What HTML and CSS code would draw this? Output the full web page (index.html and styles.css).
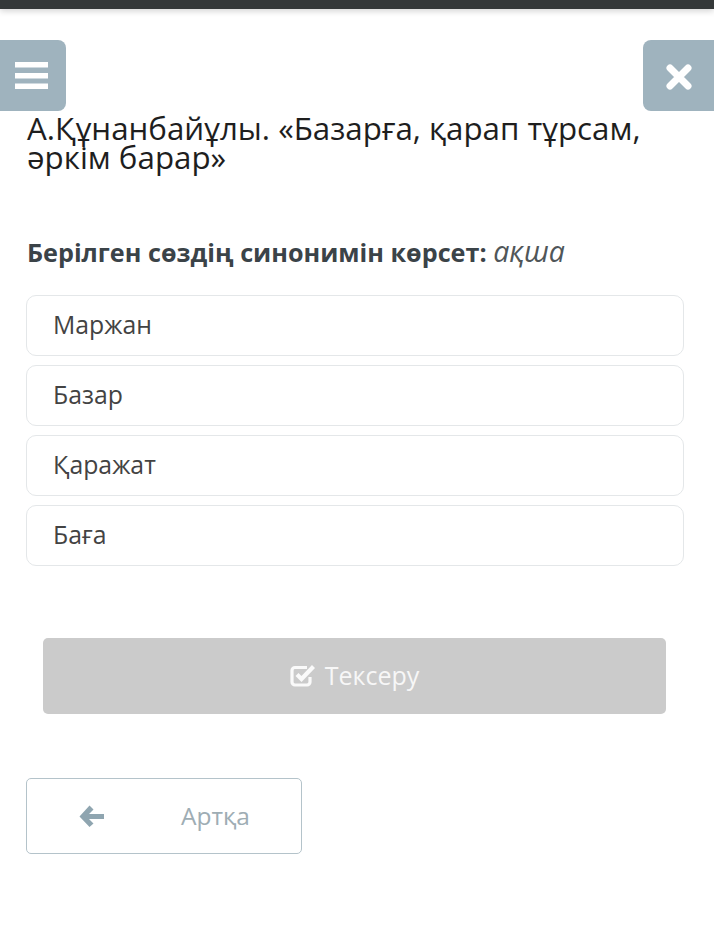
FILE: index.html
```html
<!DOCTYPE html>
<html lang="kk">
<head>
  <meta charset="UTF-8" />
  <title>Тест</title>
  <link rel="stylesheet" href="styles.css">
</head>
<body>
  <div class="topbar"></div>

  <div class="toolbar">
    <button class="tool-btn menu-btn" aria-label="Мәзір">
      <svg width="33" height="27" viewBox="0 0 33 27">
        <rect x="0" y="0" width="33" height="5.5" fill="#fff"/>
        <rect x="0" y="11" width="33" height="5.5" fill="#fff"/>
        <rect x="0" y="21.5" width="33" height="5.5" fill="#fff"/>
      </svg>
    </button>
    <button class="tool-btn close-btn" aria-label="Жабу">
      <svg width="28" height="28" viewBox="0 0 28 28">
        <path d="M5 5 L23 23 M23 5 L5 23" stroke="#fff" stroke-width="7" stroke-linecap="round"/>
      </svg>
    </button>
  </div>

  <div class="content">
    <h1 class="title">А.Құнанбайұлы. «Базарға, қарап тұрсам, әркім барар»</h1>

    <p class="question">Берілген сөздің синонимін көрсет: <em>ақша</em></p>

    <div class="options">
      <div class="option">Маржан</div>
      <div class="option">Базар</div>
      <div class="option">Қаражат</div>
      <div class="option">Баға</div>
    </div>

    <button class="check-btn" disabled>
      <svg width="26" height="24" viewBox="0 0 26 24">
        <path d="M17 4.5 H5 a3 3 0 0 0 -3 3 V19 a3 3 0 0 0 3 3 H17 a3 3 0 0 0 3 -3 V14" fill="none" stroke="#fafafa" stroke-width="3.2"/>
        <path d="M7 11.5 L11.5 16 L23.5 3.5" fill="none" stroke="#fafafa" stroke-width="4.2" stroke-linejoin="miter"/>
      </svg>
      <span>Тексеру</span>
    </button>

    <button class="back-btn">
      <svg width="26" height="22" viewBox="0 0 26 22">
        <path d="M10.5 0.5 L14.5 4.5 L10 9 H25 V14 H10 L14.5 18.5 L10.5 22 L0.5 11.5 Z" fill="#8fa5b0"/>
      </svg>
      <span>Артқа</span>
    </button>
  </div>
</body>
</html>
```

FILE: styles.css
```css
body {
  margin: 0;
  background: #fff;
  font-family: "Open Sans", "Noto Sans", sans-serif;
  color: #222;
}

.topbar {
  height: 9px;
  background: #343839;
  box-shadow: 0 2px 6px rgba(0,0,0,0.18);
}

.toolbar {
  display: flex;
  justify-content: space-between;
  margin-top: 31px;
}

.tool-btn {
  width: 66px;
  height: 71px;
  border: none;
  background: #9fb3be;
  display: flex;
  align-items: center;
  justify-content: center;
  padding: 0;
}
.menu-btn { border-radius: 0 8px 8px 0; padding-right: 4px; }
.close-btn { width: 71px; border-radius: 8px 0 0 8px; padding-top: 3px; }

.content { padding: 0 30px 0 26px; }

.title {
  margin: 3px 0 0 1px;
  font-size: 31.3px;
  line-height: 29px;
  font-weight: 400;
  color: #1e1e1e;
}

.question {
  margin: 62px 0 0 1px;
  font-size: 25.2px;
  line-height: 34px;
  font-weight: 700;
  color: #3b4348;
}
.question em {
  font-weight: 400;
  font-size: 28.5px;
  color: #505659;
}

.options {
  margin-top: 26px;
  display: flex;
  flex-direction: column;
  gap: 9px;
}
.option {
  height: 61px;
  box-sizing: border-box;
  border: 1px solid #e4e7e9;
  border-radius: 10px;
  padding: 0 26px 2px;
  line-height: 57px;
  font-size: 24.8px;
  color: #434343;
}

.check-btn {
  display: flex;
  align-items: center;
  justify-content: center;
  gap: 9px;
  width: 623px;
  height: 76px;
  margin: 72px 0 0 17px;
  border: none;
  border-radius: 5px;
  background: #cbcbcb;
  color: #f7f7f7;
  font-family: inherit;
  font-size: 25px;
  padding: 0 0 2px;
}

.back-btn {
  display: flex;
  align-items: center;
  gap: 76px;
  width: 276px;
  height: 76px;
  margin-top: 64px;
  padding: 0 0 0 52px;
  border: 1px solid #b4c3ca;
  border-radius: 5px;
  background: #fff;
  color: #9eadb4;
  font-family: inherit;
  font-size: 24.5px;
}
.back-btn span { padding-bottom: 2px; }
```
